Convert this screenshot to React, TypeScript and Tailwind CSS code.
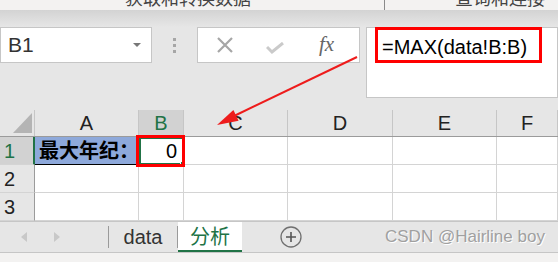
import React from 'react'

const cols = [
  { name: 'A', w: 'w-[104px]' },
  { name: 'B', w: 'w-[45px]' },
  { name: 'C', w: 'w-[104px]' },
  { name: 'D', w: 'w-[105px]' },
  { name: 'E', w: 'w-[104px]' },
  { name: 'F', w: 'flex-1' },
]

function HeaderRow() {
  return (
    <div className="flex h-[27px] bg-[#e6e6e6] border-b border-[#9b9b9b]">
      <div className="w-[35px] relative border-r border-[#c6c6c6]">
        <svg className="absolute left-0 top-0" width="35" height="27">
          <polygon points="13,23 32,23 32,3" fill="#b4b4b4" />
        </svg>
      </div>
      {cols.map((c) => (
        <div
          key={c.name}
          className={`${c.w} flex items-end justify-center pb-[1px] border-r border-[#c6c6c6] text-[20px] leading-[24px] ${
            c.name === 'B' ? 'bg-[#d2d2d2] text-[#217346]' : 'text-[#222]'
          }`}
        >
          {c.name}
        </div>
      ))}
    </div>
  )
}

function GridRow({ n }: { n: number }) {
  const active = n === 1
  return (
    <div className="flex h-[28px]">
      <div
        className={`w-[35px] flex items-center pl-[4px] text-[20px] border-b border-[#d4d4d4] ${
          active ? 'bg-[#d2d2d2] text-[#217346] border-r-2 border-r-[#217346]' : 'bg-[#e6e6e6] text-[#222] border-r border-r-[#9b9b9b]'
        }`}
      >
        {n}
      </div>
      {cols.map((c) => {
        if (active && c.name === 'A') {
          return (
            <div
              key={c.name}
              className={`${c.w} flex items-center pl-[4px] bg-[#8ea9db] border-b border-black text-[20px] font-bold text-black whitespace-nowrap`}
            >
              最大年纪：
            </div>
          )
        }
        if (active && c.name === 'B') {
          return (
            <div
              key={c.name}
              className={`${c.w} flex items-center justify-end pr-[5px] bg-white border-2 border-[#217346] text-[20px] text-black relative`}
            >
              0
              <div className="absolute -right-[3px] -bottom-[3px] w-[5px] h-[5px] bg-[#217346] border border-white" />
            </div>
          )
        }
        return <div key={c.name} className={`${c.w} bg-white border-r border-b border-[#d4d4d4]`} />
      })}
    </div>
  )
}

export default function App() {
  return (
    <div
      className="w-[558px] h-[262px] relative overflow-hidden bg-[#e6e6e6] flex flex-col"
      style={{ fontFamily: '"Liberation Sans", "Noto Sans CJK SC", sans-serif' }}
    >
      {/* ribbon remains, cut off at the top like the screenshot */}
      <div className="h-[10px] bg-[#f3f2f1] overflow-hidden relative">
        <div className="flex items-start -mt-[12px] text-[18px] leading-[22px] text-[#444]">
          <span className="ml-[125px] w-[259px]">获取和转换数据</span>
          <span className="w-px h-[17px] bg-[#8a8a8a] mt-[5px]" />
          <span className="ml-[70px]">查询和连接</span>
        </div>
      </div>
      <div className="h-[17px] bg-gradient-to-b from-[#d3d3d3] to-[#e6e6e6]" />

      {/* formula bar */}
      <div className="h-[83px] flex items-start">
        <div className="w-[152px] h-[36px] bg-white border border-[#c6c6c6] flex items-center justify-between pl-[7px] pr-[10px]">
          <span className="text-[21px] text-[#333]">B1</span>
          <svg width="8" height="4">
            <polygon points="0,0 8,0 4,4" fill="#777" />
          </svg>
        </div>
        <div className="w-[45px] h-[36px] flex flex-col items-center justify-center gap-[3px]">
          <div className="w-[3px] h-[3px] bg-[#a6a6a6]" />
          <div className="w-[3px] h-[3px] bg-[#a6a6a6]" />
          <div className="w-[3px] h-[3px] bg-[#a6a6a6]" />
        </div>
        <div className="w-[163px] h-[36px] bg-white border border-[#c6c6c6] flex items-center">
          <svg className="ml-[19px]" width="16" height="16" viewBox="0 0 16 16">
            <path d="M1 1 L15 15 M15 1 L1 15" stroke="#a6a6a6" strokeWidth="2.2" />
          </svg>
          <svg className="ml-[33px] mt-[6px]" width="18" height="12" viewBox="0 0 18 12">
            <path d="M1 5 L6 10 L17 1" stroke="#cacaca" strokeWidth="3" fill="none" />
          </svg>
          <span
            className="ml-[35px] text-[21px] italic text-[#666]"
            style={{ fontFamily: '"Liberation Serif", serif' }}
          >
            fx
          </span>
        </div>
        <div className="ml-[6px] flex-1 h-[71px] bg-white border border-[#c6c6c6] pl-[15px] pt-[4px]">
          <span className="text-[20px] text-black">=MAX(data!B:B)</span>
        </div>
      </div>

      {/* grid */}
      <div className="flex flex-col">
        <HeaderRow />
        <GridRow n={1} />
        <GridRow n={2} />
        <GridRow n={3} />
      </div>

      {/* sheet tabs */}
      <div className="h-[32px] flex items-stretch bg-[#e6e6e6] border-t border-b border-[#c6c6c6]">
        <div className="w-[108px] flex items-center">
          <svg className="ml-[21px]" width="6" height="10">
            <polygon points="6,0 6,10 0,5" fill="#c8c8c8" />
          </svg>
          <svg className="ml-[27px]" width="6" height="10">
            <polygon points="0,0 0,10 6,5" fill="#c8c8c8" />
          </svg>
        </div>
        <div className="w-px bg-[#9a9a9a] my-[4px]" />
        <div className="w-[68px] flex items-center justify-center text-[20px] text-[#333]">data</div>
        <div className="w-px bg-[#9a9a9a] my-[4px]" />
        <div className="w-[64px] bg-white flex items-center justify-center text-[20px] text-[#217346] border-b-2 border-[#217346] pt-[1px]">
          分析
        </div>
        <div className="ml-[38px] flex items-center">
          <svg width="22" height="22" viewBox="0 0 22 22">
            <circle cx="11" cy="11" r="10" stroke="#707070" strokeWidth="1.3" fill="none" />
            <path d="M11 6 V16 M6 11 H16" stroke="#555" strokeWidth="1.6" />
          </svg>
        </div>
        <div
          className="ml-[83px] flex items-center text-[17px] text-[#a0a0a0]"
          style={{ textShadow: '1px 1px 0 #ffffff' }}
        >
          CSDN @Hairline boy
        </div>
      </div>
      <div className="flex-1 bg-[#f3f2f1]" />

      {/* annotations */}
      <div className="absolute left-[375px] top-[27px] w-[167px] h-[36px] border-[3px] border-[#ff0000]" />
      <div className="absolute left-[136px] top-[135px] w-[49px] h-[32px] border-[3px] border-[#ff0000]" />
      <svg className="absolute left-0 top-0 pointer-events-none" width="558" height="262">
        <line x1="357" y1="57" x2="232" y2="117" stroke="#ee1c1c" strokeWidth="2" />
        <polygon points="217,125 238.6,120.7 233.4,109.9" fill="#ee1c1c" />
      </svg>
    </div>
  )
}
